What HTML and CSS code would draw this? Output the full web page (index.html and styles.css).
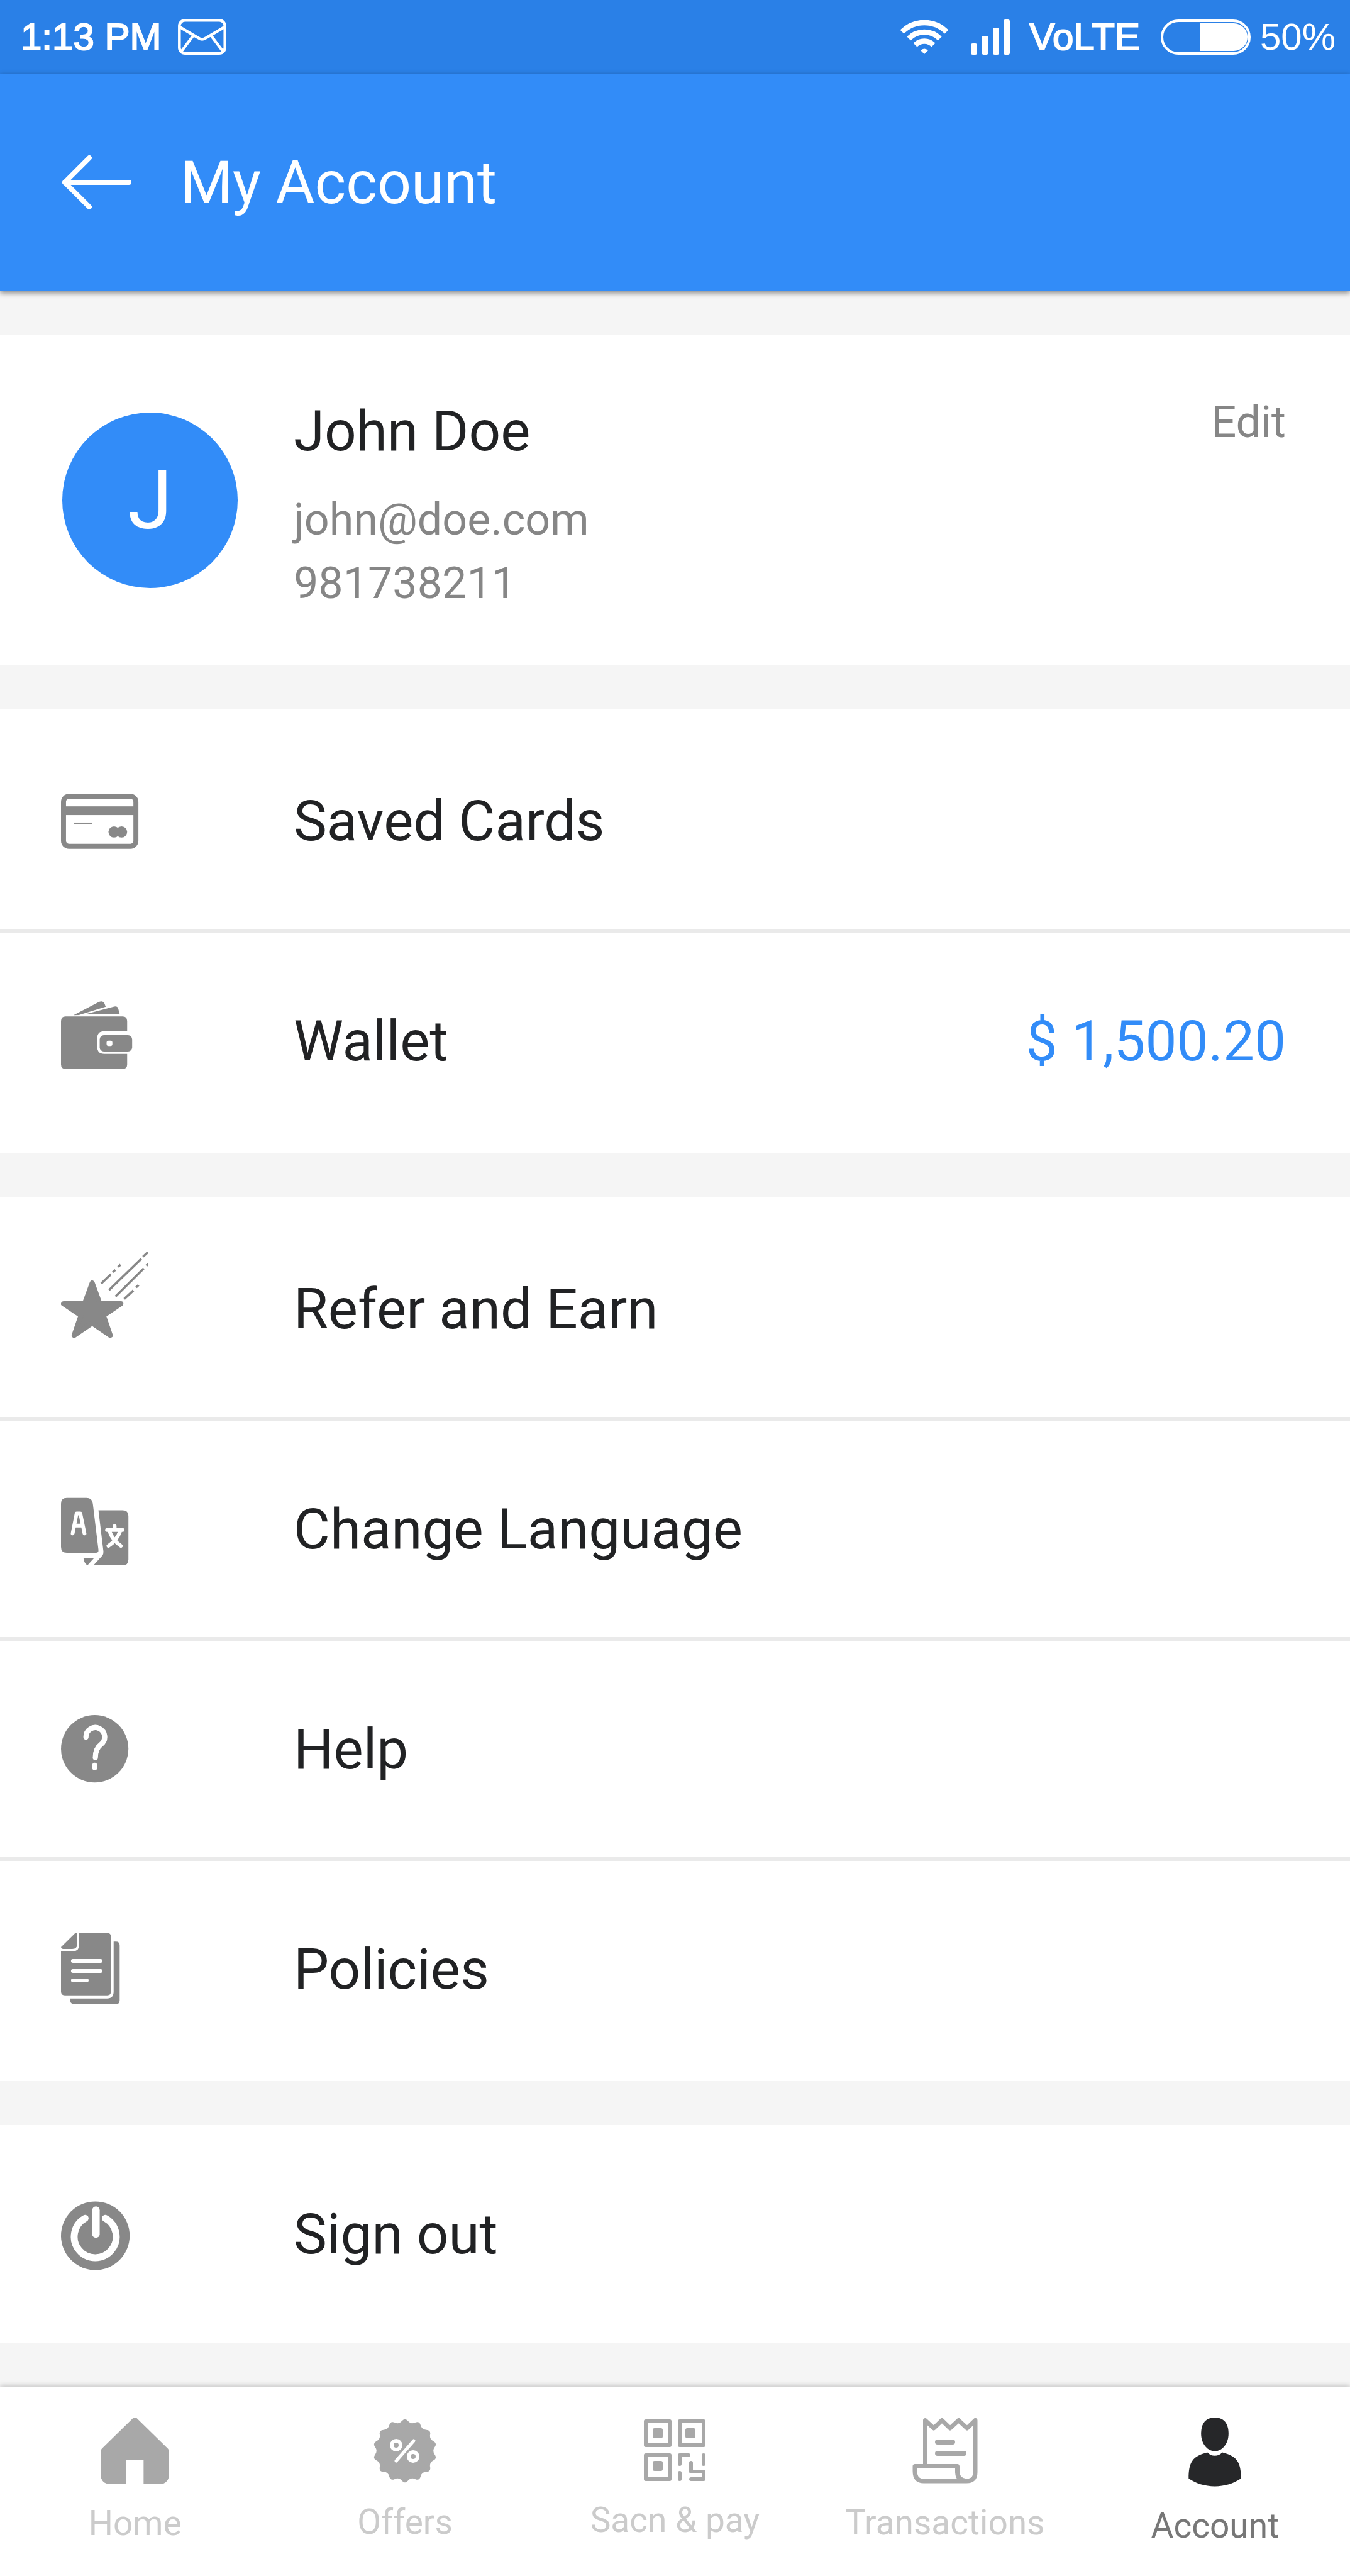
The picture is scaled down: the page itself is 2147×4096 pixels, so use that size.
FILE: index.html
```html
<!DOCTYPE html>
<html lang="en">
<head>
  <meta charset="UTF-8">
  <meta name="viewport" content="width=device-width, initial-scale=1.0">
  <title>My Account</title>
  <link rel="stylesheet" href="styles.css">
</head>
<body>

  <!-- Status bar -->
  <div class="status-bar">
    <div class="status-left">
      <span class="medium">1:13 PM</span>
      <svg width="77" height="57" viewBox="0 0 77 57" fill="none" stroke="#fff" stroke-width="4.5">
        <rect x="2.3" y="2.3" width="72.4" height="52.4" rx="9"/>
        <path d="M3 13 L32 30 Q38.500 35 45 30 L74 13 M24 27 L6 51 M53 27 L71 51"/>
      </svg>
    </div>
    <div class="status-right">
      <svg class="wifi" width="76" height="54" viewBox="0 0 76 54" fill="none" stroke="#fff" stroke-width="8.500">
        <path d="M2.600 18.600 A50 50 0 0 1 73.400 18.600"/>
        <path d="M13.300 29.300 A35 35 0 0 1 62.700 29.300"/>
        <path d="M23.500 39.500 A20.500 20.500 0 0 1 52.500 39.500"/>
        <path d="M38 54 L32 48 Q38 43 44 48 Z" fill="#fff" stroke="none"/>
      </svg>
      <svg class="signal" width="62" height="56" viewBox="0 0 62 56" fill="#fff">
        <rect x="0" y="38" width="10" height="18" rx="3"/>
        <rect x="17.500" y="26" width="10" height="30" rx="3"/>
        <rect x="35" y="13" width="10" height="43" rx="3"/>
        <rect x="52" y="0" width="10" height="56" rx="3"/>
      </svg>
      <span class="network medium">VoLTE</span>
      <svg class="battery" width="143" height="56" viewBox="0 0 143 56">
        <rect x="2" y="2" width="139" height="52" rx="26" fill="none" stroke="#fff" stroke-width="4"/>
        <path d="M62 6 H116 A22 22 0 0 1 116 50 H62 Z" fill="#fff"/>
      </svg>
      <span class="percent">50%</span>
    </div>
  </div>

  <!-- Header -->
  <header class="app-header">
    <button class="back-btn" aria-label="Back">
      <svg width="110" height="86" viewBox="0 0 110 86" fill="none" stroke="#fff" stroke-width="8" stroke-linecap="round" stroke-linejoin="round">
        <path d="M43 4 L4 43 L43 82 M4 43 H106"/>
      </svg>
    </button>
    <h1>My Account</h1>
  </header>

  <main>
    <!-- Profile -->
    <section class="profile">
      <div class="avatar">J</div>
      <div class="details">
        <h2>John Doe</h2>
        <p>john@doe.com</p>
        <p>981738211</p>
      </div>
      <button class="edit-btn">Edit</button>
    </section>

    <nav class="menu">
      <a href="#cards">
        <svg viewBox="114 -26 420 550" fill="#888">
          <rect x="126" y="132" width="348" height="240" rx="26" fill="none" stroke="#888" stroke-width="24"/>
          <rect x="130" y="180" width="340" height="42"/>
          <rect x="175" y="258" width="89" height="6"/>
          <circle cx="369" cy="303" r="27"/>
          <circle cx="405" cy="303" r="27"/>
          <rect x="375" y="282" width="24" height="42"/>
        </svg>
        <span>Saved Cards</span>
      </a>
      <a href="#wallet">
        <svg viewBox="114 10 420 550" fill="#888">
          <path d="M174 162 L297 98 Q316 90 323 106 L329 121 L200 161 Z"/>
          <path d="M236 156 L364 122 Q384 115 389 130 L396 156 Z"/>
          <path d="M136 168 H410 Q432 168 432 190 V239 H322 Q288 239 288 273 V314 Q288 348 322 348 H432 V398 Q432 420 410 420 H136 Q114 420 114 398 V190 Q114 168 136 168 Z"/>
          <rect x="300" y="258" width="156" height="78" rx="20"/>
          <rect x="333" y="284" width="28" height="26" rx="10" fill="#fff"/>
        </svg>
        <span>Wallet</span>
        <span class="amount">$ 1,500.20</span>
      </a>
    </nav>

    <nav class="menu">
      <a href="#refer">
        <svg viewBox="114 95 420 550" fill="#888" stroke="#888">
          <path d="M264 246 L301 346 L402 346 L318 402 L351 498 L264 439 L177 498 L210 402 L126 346 L227 346 Z" stroke-width="24" stroke-linejoin="round"/>
          <path d="M307 249 L354 204 M363 194 L375 183 M388 169 L400 158 M345 280 L500 130 M508 120 L543 88 M376 311 L512 176 M524 163 L537 152 M418 323 L462 282 M475 267 L487 256" fill="none" stroke-width="11"/>
        </svg>
        <span>Refer and Earn</span>
      </a>
      <a href="#language">
        <svg viewBox="114 -48 420 550" fill="#888">
          <path d="M142 78 H236 Q264 78 267 106 L294 328 Q295 342 282 342 H142 Q114 342 114 314 V106 Q114 78 142 78 Z"/>
          <path d="M294 138 H410 Q438 138 438 166 V374 Q438 402 410 402 H270 L312 356 Q319 348 318 336 Z"/>
          <path d="M222 366 H274 L241 402 Q223 390 222 366 Z"/>
          <g fill="none" stroke="#fff" stroke-width="18" stroke-linecap="round" stroke-linejoin="round">
            <path d="M170 249 L189 153 H207 L227 249 M180 211 H217"/>
            <path d="M372 213 V231 M335 232 H410 M346 236 Q362 282 402 309 M399 236 Q383 282 342 309"/>
          </g>
        </svg>
        <span>Change Language</span>
      </a>
      <a href="#help">
        <svg viewBox="114 -11 420 550">
          <circle cx="276" cy="263" r="162" fill="#888"/>
          <path d="M234 207 A45 45 0 1 1 306 242 Q279 262 279 306 M276 342 V354" fill="none" stroke="#fff" stroke-width="25" stroke-linecap="round"/>
        </svg>
        <span>Help</span>
      </a>
      <a href="#policies">
        <svg viewBox="114 1045 420 550" fill="#888">
          <path d="M201 1146 H336 Q354 1146 354 1164 V1428 Q354 1446 336 1446 H132 Q114 1446 114 1428 V1233 H174 Q201 1233 201 1206 Z"/>
          <path d="M180 1149 Q186 1144 192 1150 V1200 Q192 1223 168 1223 H124 Q116 1223 114 1214 Z"/>
          <path d="M367 1188 H378 Q396 1188 396 1206 V1470 Q396 1488 378 1488 H176 Q156 1488 156 1461 H335 Q367 1461 367 1428 Z"/>
          <path d="M171 1281 H304 M171 1329 H304 M171 1374 H238" fill="none" stroke="#fff" stroke-width="18" stroke-linecap="round"/>
        </svg>
        <span>Policies</span>
      </a>
    </nav>

    <nav class="menu menu-single">
      <a href="#signout">
        <svg viewBox="114 -29 420 550">
          <circle cx="279" cy="255" r="165" fill="#888"/>
          <path d="M230 171 A101 101 0 1 0 327 171" fill="none" stroke="#fff" stroke-width="33" stroke-linecap="round"/>
          <path d="M282 132 V247" fill="none" stroke="#fff" stroke-width="36" stroke-linecap="round"/>
        </svg>
        <span>Sign out</span>
      </a>
    </nav>
  </main>

  <!-- Bottom tabs -->
  <nav class="tabs">
    <a href="#home">
      <svg width="109" height="106" viewBox="0 0 110 107" fill="#a8a8a8">
        <path d="M52 1 Q55 -1 58 1 L108 50 Q110 52 110 55 V90 Q110 107 93 107 H69 V68 H41 V107 H17 Q0 107 0 90 V55 Q0 52 2 50 Z"/>
      </svg>
      <span>Home</span>
    </a>
    <a href="#offers">
      <svg width="100" height="104" viewBox="-50 -53 100 104" fill="#a8a8a8">
        <path d="M-4.800 -47.500 Q0 -53 4.800 -47.500 Q9.600 -41.900 16.300 -44.900 Q23 -47.800 24.900 -40.700 Q26.800 -33.600 34.100 -33.300 Q41.400 -33 40.100 -25.900 Q38.700 -18.700 45.200 -15.300 Q51.700 -11.800 47.400 -5.900 Q43 0 47.400 5.900 Q51.700 11.800 45.200 15.300 Q38.700 18.700 40.100 25.900 Q41.400 33 34.100 33.300 Q26.800 33.600 24.900 40.700 Q23 47.800 16.300 44.900 Q9.600 41.900 4.800 47.500 Q0 53 -4.800 47.500 Q-9.600 41.900 -16.300 44.900 Q-23 47.800 -24.900 40.700 Q-26.800 33.600 -34.100 33.300 Q-41.400 33 -40.100 25.900 Q-38.700 18.700 -45.200 15.300 Q-51.700 11.800 -47.400 5.900 Q-43 0 -47.400 -5.900 Q-51.700 -11.800 -45.200 -15.300 Q-38.700 -18.700 -40.100 -25.900 Q-41.400 -33 -34.100 -33.300 Q-26.800 -33.600 -24.900 -40.700 Q-23 -47.800 -16.300 -44.900 Q-9.600 -41.900 -4.800 -47.500 Z"/>
        <g fill="none" stroke="#fff" stroke-width="6">
          <circle cx="-14" cy="-9" r="7"/>
          <circle cx="13" cy="9" r="7"/>
          <path d="M14 -16 L-14 16" stroke-width="5" stroke-linecap="round"/>
        </g>
      </svg>
      <span>Offers</span>
    </a>
    <a href="#scan">
      <svg width="98" height="101" viewBox="0 -3 98 101" fill="#a8a8a8">
        <g fill="none" stroke="#a8a8a8" stroke-width="6" stroke-linecap="round" stroke-linejoin="round">
          <rect x="3" y="3" width="38" height="38"/>
          <rect x="57" y="3" width="38" height="38"/>
          <rect x="3" y="57" width="38" height="38"/>
          <path d="M57 71 V57 H71 M95 57 V71 M57 85 V95 M75 69 V83 H95 V95 H75"/>
        </g>
        <rect x="14" y="14" width="16" height="16" rx="3"/>
        <rect x="66" y="14" width="16" height="16" rx="3"/>
        <rect x="14" y="66" width="16" height="16" rx="3"/>
      </svg>
      <span>Sacn &amp; pay</span>
    </a>
    <a href="#transactions">
      <svg width="104" height="105" viewBox="0 -1 104 105" fill="none" stroke="#a8a8a8" stroke-width="7" stroke-linecap="round" stroke-linejoin="round">
        <path d="M20.500 76 V3.500 L34 16 L47 3.500 L60 16 L73.500 3.500 L87 16 L100 3.500 V86 Q100 100 86 100 H18 Q4 100 4 84 V76.500 H71.500 V86 Q72 99 86 100"/>
        <path d="M40 38 H64 M40 56 H82" stroke-width="8"/>
      </svg>
      <span>Transactions</span>
    </a>
    <a href="#account" class="active">
      <svg width="84" height="110" viewBox="0 0 84 111" fill="#262729">
        <path d="M42 0 C56 0 64 9 64 26 C64 42 54 54 42 54 C30 54 20 42 20 26 C20 9 28 0 42 0 Z"/>
        <path d="M30 56 C6 62 0 72 0 98 C12 106 26 110.500 42 110.500 C58 110.500 72 106 84 98 C84 72 78 62 54 56 C48 63 36 63 30 56 Z"/>
      </svg>
      <span>Account</span>
    </a>
  </nav>

</body>
</html>
```

FILE: styles.css
```css
* {
  box-sizing: border-box;
}

body {
  margin: 0;
  font-family: Roboto, sans-serif;
  background: #f5f5f5;
  color: #212224;
  display: flex;
  flex-direction: column;
  min-height: 100vh;
}

h1, h2, p {
  margin: 0;
  font-weight: 400;
}

button {
  font-family: inherit;
  background: none;
  border: none;
  padding: 0;
  cursor: pointer;
}

a {
  color: inherit;
  text-decoration: none;
}

svg {
  display: block;
  flex-shrink: 0;
}

/* Status bar */
.status-bar {
  height: 117px;
  padding: 0 23px 0 33px;
  display: flex;
  justify-content: space-between;
  align-items: center;
  background: #2a80e7;
  color: white;
  font-family: "Liberation Sans", Arial, sans-serif;
  font-size: 60px;
}

.status-left,
.status-right {
  display: flex;
  align-items: center;
}

.status-left {
  gap: 27px;
}

.medium {
  -webkit-text-stroke: 2px white;
}

.signal {
  margin-left: 36px;
}

.network {
  margin-left: 31px;
}

.battery {
  margin-left: 33px;
}

.percent {
  margin-left: 15px;
}

/* Header */
.app-header {
  height: 346px;
  padding-left: 99px;
  display: flex;
  align-items: center;
  gap: 78px;
  background: #328cf8;
  color: white;
  box-shadow: 0 3px 8px rgba(0,0,0,0.45);
}

.app-header h1 {
  font-size: 95px;
}

main {
  display: flex;
  flex-direction: column;
  gap: 70px;
  padding: 70px 0;
}

/* Profile */
.profile {
  min-height: 524px;
  padding: 0 102px 0 99px;
  display: flex;
  align-items: flex-start;
  background: white;
}

.avatar {
  align-self: center;
  width: 279px;
  height: 279px;
  margin-right: 89px;
  border-radius: 50%;
  display: flex;
  align-items: center;
  justify-content: center;
  background: #328cf8;
  color: white;
  font-size: 129px;
}

.details {
  flex: 1;
  margin-top: 101px;
}

.details h2 {
  font-size: 89px;
  line-height: 104px;
  margin-bottom: 38px;
}

.details p,
.edit-btn {
  font-size: 70px;
  line-height: 101px;
  color: #868686;
}

.edit-btn {
  margin-top: 88px;
}

/* Menu lists */
.menu {
  display: flex;
  flex-direction: column;
  gap: 6px;
  padding: 6px 0;
  background: linear-gradient(white, white) top / 100% 6px no-repeat,
              linear-gradient(white, white) bottom / 100% 6px no-repeat,
              #eaeaea;
}

.menu a {
  height: 344px;
  padding: 0 102px 0 97px;
  display: flex;
  align-items: center;
  background: white;
  font-size: 89px;
}

.menu svg {
  width: 139px;
  height: 182px;
  margin-right: 231px;
}

.menu .amount {
  margin-left: auto;
  color: #328cf8;
}

.menu-single {
  padding: 0;
}

.menu-single a {
  height: 346px;
}

/* Bottom tabs */
.tabs {
  flex: 1;
  min-height: 301px;
  padding-top: 49px;
  display: grid;
  grid-template-columns: repeat(5, 1fr);
  background: white;
  box-shadow: 0 -2px 8px rgba(0,0,0,0.2);
}

.tabs a {
  display: flex;
  flex-direction: column;
  align-items: center;
  gap: 30px;
  color: #cbcbcb;
  font-size: 55px;
  line-height: 64px;
}

.tabs .active {
  color: #777;
}
```
